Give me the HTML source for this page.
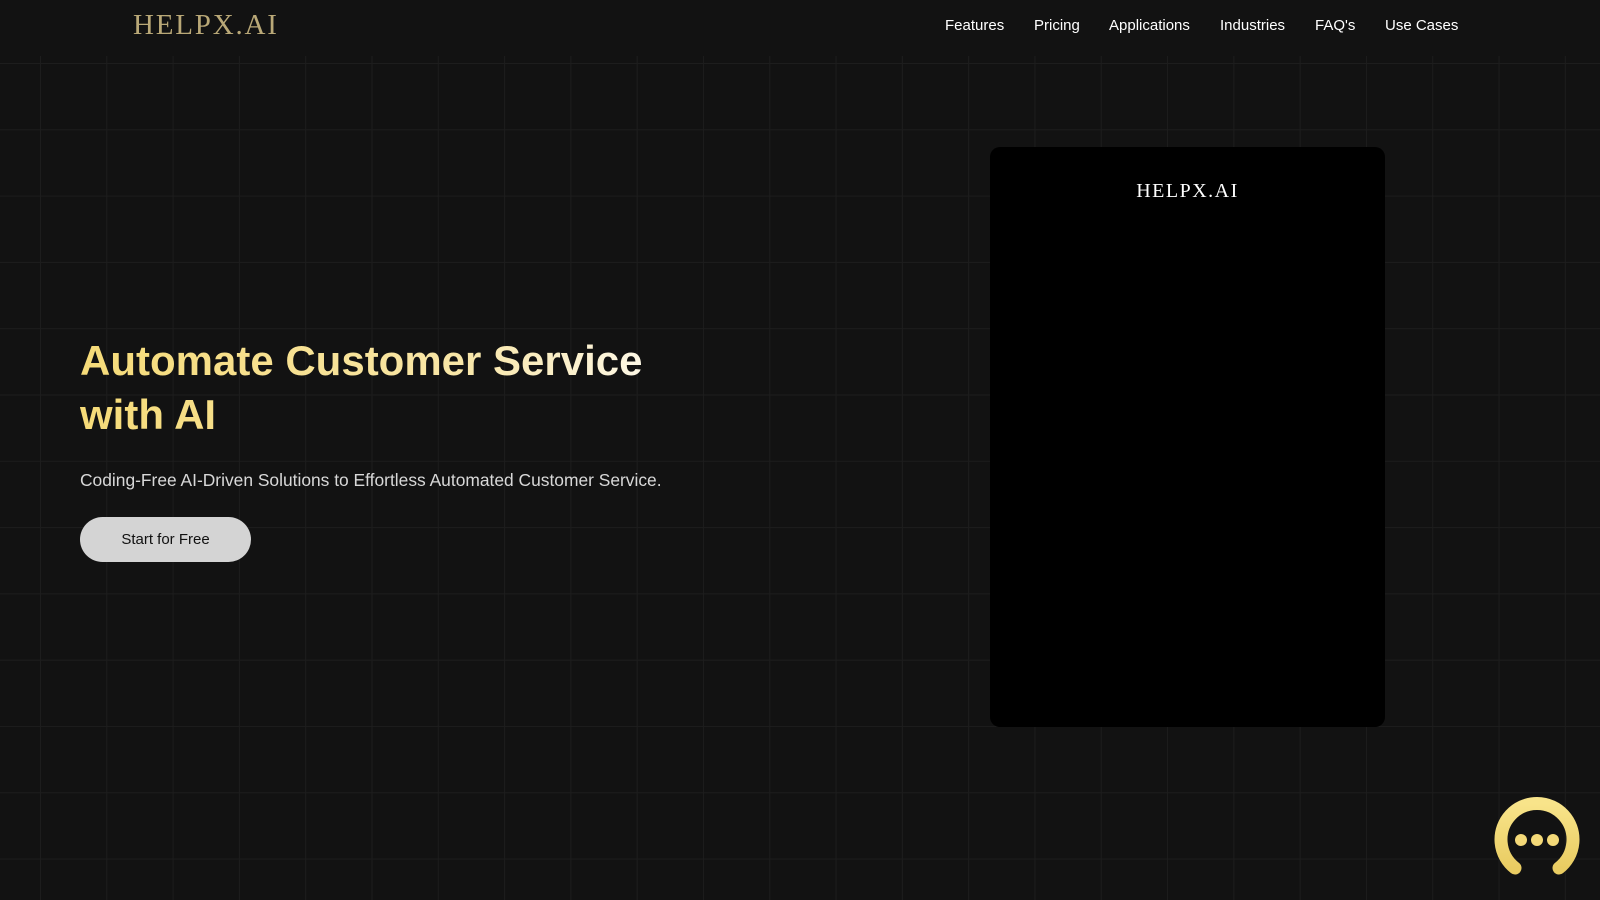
<!DOCTYPE html>
<html><head><meta charset="utf-8"><style>
*{margin:0;padding:0;box-sizing:border-box}
html,body{width:1600px;height:900px;overflow:hidden;background:#121212;font-family:"Liberation Sans",sans-serif}
.grid{position:absolute;left:0;top:56px;width:1600px;height:844px;
background-image:linear-gradient(to right,#1d1d1d 1px,transparent 1px),linear-gradient(to bottom,#1d1d1d 1px,transparent 1px);
background-size:66.3px 66.3px;background-position:40px 7px}
.logo{position:absolute;left:133px;top:9px;font-family:"Liberation Serif",serif;font-size:29px;letter-spacing:1.8px;color:#b9a877}
nav{position:absolute;top:17px;left:0;font-size:15px;color:#fff}
nav span{position:absolute;white-space:nowrap}
h1{position:absolute;left:80px;top:334px;font-size:42px;line-height:54px;font-weight:bold;
background:linear-gradient(90deg,#f6db78 0%,#f8e6a8 60%,#ffffff 100%);-webkit-background-clip:text;background-clip:text;color:transparent;width:640px}
.sub{position:absolute;left:80px;top:470px;font-size:17.4px;color:#d8d8d8}
.btn{position:absolute;left:80px;top:517px;width:171px;height:45px;border-radius:23px;background:#d4d4d4;color:#111;font-size:15px;text-align:center;line-height:45px}
.card{position:absolute;left:990px;top:147px;width:395px;height:580px;background:#000;border-radius:10px}
.card div{position:absolute;top:33px;width:100%;text-align:center;font-family:"Liberation Serif",serif;font-size:20px;letter-spacing:1.5px;color:#fff}
</style></head><body>
<div class="grid"></div>
<div class="logo">HELPX.AI</div>
<nav><span style="left:945px">Features</span><span style="left:1034px">Pricing</span><span style="left:1109px">Applications</span><span style="left:1220px">Industries</span><span style="left:1315px">FAQ's</span><span style="left:1385px">Use Cases</span></nav>
<h1>Automate Customer Service with AI</h1>
<div class="sub">Coding-Free AI-Driven Solutions to Effortless Automated Customer Service.</div>
<div class="btn">Start for Free</div>
<div class="card"><div>HELPX.AI</div></div>
<svg style="position:absolute;left:1492px;top:794px" width="92" height="92" viewBox="0 0 92 92">
<defs><linearGradient id="g" x1="0" y1="0" x2="0" y2="1"><stop offset="0" stop-color="#f8e48a"/><stop offset="1" stop-color="#e9cc62"/></linearGradient></defs>
<path d="M23 74 A36 36 0 1 1 67 74" fill="none" stroke="url(#g)" stroke-width="13" stroke-linecap="round"/>
<circle cx="29" cy="46" r="6" fill="#f4d978"/><circle cx="45" cy="46" r="6" fill="#f4d978"/><circle cx="61" cy="46" r="6" fill="#f4d978"/>
</svg>
</body></html>
